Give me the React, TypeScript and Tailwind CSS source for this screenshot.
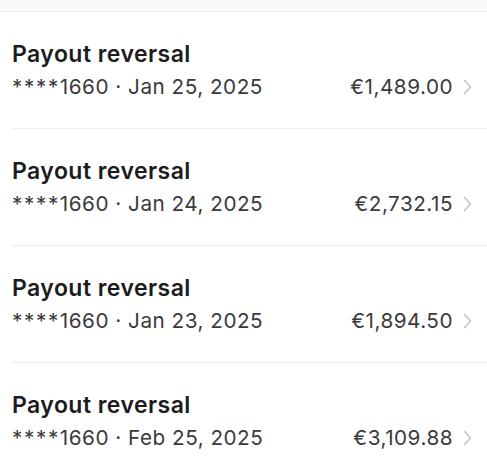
import React from 'react';

type Payout = { card: string; date: string; amount: string };

const payouts: Payout[] = [
  { card: '1660', date: 'Jan 25, 2025', amount: '€1,489.00' },
  { card: '1660', date: 'Jan 24, 2025', amount: '€2,732.15' },
  { card: '1660', date: 'Jan 23, 2025', amount: '€1,894.50' },
  { card: '1660', date: 'Feb 25, 2025', amount: '€3,109.88' },
];

const Chevron = () => (
  <svg width="9" height="16" viewBox="0 0 9 16" fill="none" className="shrink-0">
    <path d="M1.5 1.5L7.5 8L1.5 14.5" stroke="#c4c4c7" strokeWidth="1.6" strokeLinecap="round" strokeLinejoin="round" />
  </svg>
);

const App: React.FC = () => {
  return (
    <div className="min-h-screen w-full bg-white font-['Inter',sans-serif]">
      {/* header strip */}
      <div className="h-[12px] bg-[#fafafa] border-b border-[#ececec]"></div>

      <ul className="pl-[12px]">
        {payouts.map((p, i) => (
          <li key={i} className="border-b border-[#efefef] pr-[15px] pt-[28px] pb-[27px]">
            <div className="text-[23px] leading-[28px] font-semibold text-[#1c1c1e] tracking-[0.45px]">
              Payout reversal
            </div>
            <div className="mt-[5px] flex items-center justify-between text-[20.7px] leading-[28px] text-[#3a3a3c] tracking-[0.5px]">
              <span>
                <span className="tracking-[1.6px]">****</span>
                {p.card} · {p.date}
              </span>
              <span className="flex items-center gap-[10px]">
                {p.amount}
                <Chevron />
              </span>
            </div>
          </li>
        ))}
      </ul>
    </div>
  );
};

export default App;
